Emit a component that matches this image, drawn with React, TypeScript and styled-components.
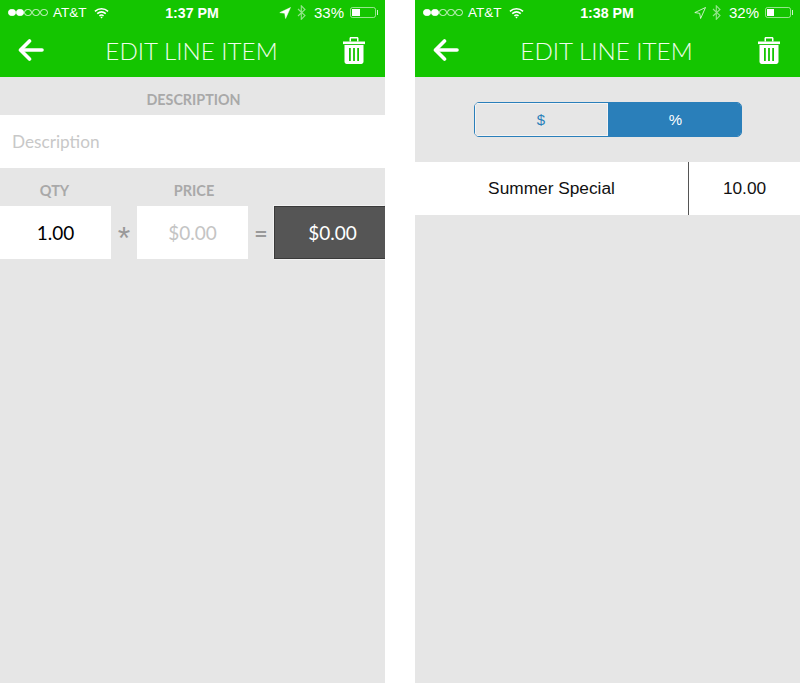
import React from "react";
import styled, { createGlobalStyle } from "styled-components";

const Global = createGlobalStyle`
  html, body { margin: 0; padding: 0; background: #fff; }
  #root { width: 800px; height: 683px; overflow: hidden; }
`;

const Page = styled.div`
  width: 800px;
  height: 683px;
  display: flex;
  justify-content: space-between;
  background: #fff;
`;

const Phone = styled.section`
  width: 385px;
  height: 683px;
  background: #e6e6e6;
  display: flex;
  flex-direction: column;
`;

const Header = styled.header`
  height: 77px;
  background: #14c500;
  color: #fff;
  display: flex;
  flex-direction: column;
  flex-shrink: 0;
`;

const StatusBar = styled.div`
  height: 25px;
  display: grid;
  grid-template-columns: 1fr auto 1fr;
  align-items: center;
  padding: 0 9px 0 8px;
  font: 400 13.5px "Liberation Sans", Arial, sans-serif;
`;

const StatusLeft = styled.div`
  display: flex;
  align-items: center;
`;

const StatusRight = styled.div`
  display: flex;
  align-items: center;
  justify-content: flex-end;
`;

const Signal = styled.span`
  display: flex;
  gap: 0.5px;
  margin-right: 5px;
`;

const Dot = styled.i<{ $on: boolean }>`
  width: 7.6px;
  height: 7.6px;
  box-sizing: border-box;
  border-radius: 50%;
  border: 1px solid #fff;
  background: ${(p) => (p.$on ? "#fff" : "transparent")};
  opacity: ${(p) => (p.$on ? 1 : 0.8)};
`;

const Carrier = styled.span`
  margin-right: 8px;
`;

const Clock = styled.span`
  font-weight: 700;
  font-size: 14.2px;
`;

const Percent = styled.span`
  margin: 0 6px 0 8px;
  font-size: 15px;
`;

const Battery = styled.span`
  width: 26px;
  height: 11px;
  box-sizing: border-box;
  border: 1px solid rgba(255, 255, 255, 0.55);
  border-radius: 2.5px;
  padding: 1px;
  display: flex;
  position: relative;
  &::after {
    content: "";
    position: absolute;
    right: -3px;
    top: 2px;
    width: 1.5px;
    height: 5px;
    background: rgba(255, 255, 255, 0.8);
  }
`;

const BatteryFill = styled.span<{ $w: number }>`
  width: ${(p) => p.$w}px;
  background: #fff;
`;

const NavBar = styled.div`
  flex: 1;
  display: grid;
  grid-template-columns: 1fr auto 1fr;
  align-items: center;
  padding: 0 20px 2px 18px;
`;

const NavEnd = styled.div`
  display: flex;
  justify-content: flex-end;
`;

const Title = styled.h1`
  margin: 0;
  font: 300 24.2px Lato, "Open Sans", sans-serif;
  color: #effdec;
`;

const SectionLabel = styled.div`
  height: 38px;
  box-sizing: border-box;
  padding: 6px 0 0 2px;
  display: flex;
  align-items: center;
  justify-content: center;
  font: 700 14.3px Lato, sans-serif;
  color: #a9a9a9;
`;

const DescriptionField = styled.div`
  height: 53px;
  background: #fff;
  display: flex;
  align-items: center;
  padding-left: 12px;
  font: 400 17.2px Lato, sans-serif;
  color: #c8c8c8;
`;

const CalcGrid = styled.div`
  display: grid;
  grid-template-columns: 111px 26px 111px 26px 111px;
`;

const CalcLabel = styled.div<{ $nudge: number }>`
  height: 38px;
  box-sizing: border-box;
  padding-top: 6px;
  padding-left: ${(p) => Math.max(p.$nudge, 0)}px;
  padding-right: ${(p) => Math.max(-p.$nudge, 0)}px;
  display: flex;
  align-items: center;
  justify-content: center;
  font: 700 14.5px Lato, sans-serif;
  color: #a9a9a9;
`;

const Cell = styled.div<{ $muted?: boolean }>`
  height: 53px;
  background: #fff;
  display: flex;
  align-items: center;
  justify-content: center;
  font: 400 19px Lato, sans-serif;
  color: ${(p) => (p.$muted ? "#c4c4c4" : "#000")};
`;

const Operator = styled.div<{ $star?: boolean }>`
  height: 53px;
  box-sizing: border-box;
  display: flex;
  align-items: center;
  justify-content: center;
  padding-top: ${(p) => (p.$star ? "11px" : "0")};
  font: ${(p) => (p.$star ? '400 32px "Liberation Sans", sans-serif' : "700 23px Lato, sans-serif")};
  color: #999;
`;

const TotalCell = styled.div`
  height: 53px;
  box-sizing: border-box;
  background: #555;
  border: 1px solid #3a3a3a;
  border-right: 0;
  padding-left: 5px;
  box-shadow: -1px -1px 0 #f2f2f2, 0 1px 0 #f2f2f2;
  display: flex;
  align-items: center;
  justify-content: center;
  font: 400 19px Lato, sans-serif;
  color: #fff;
`;

const Segmented = styled.div`
  align-self: center;
  margin-top: 25px;
  width: 268px;
  height: 35px;
  box-sizing: border-box;
  border: 1.5px solid #2a7fba;
  border-radius: 5px;
  display: flex;
  overflow: hidden;
`;

const Segment = styled.div<{ $active?: boolean }>`
  width: 50%;
  box-sizing: border-box;
  display: flex;
  align-items: center;
  justify-content: center;
  padding-left: ${(p) => (p.$active ? "3px" : "0")};
  font: 400 15px "Liberation Sans", Arial, sans-serif;
  background: ${(p) => (p.$active ? "#2a7fba" : "#e6e6e6")};
  box-shadow: ${(p) => (p.$active ? "none" : "inset 0 0 0 1px #f4f4f4")};
  color: ${(p) => (p.$active ? "#fff" : "#2a7fba")};
`;

const DiscountRow = styled.div`
  margin-top: 25px;
  height: 53px;
  background: #fff;
  display: grid;
  grid-template-columns: 273px 1px 111px;
  font: 400 17.3px "Liberation Sans", Arial, sans-serif;
  color: #111;
`;

const DiscountCell = styled.div`
  display: flex;
  align-items: center;
  justify-content: center;
`;

const Divider = styled.div`
  background: #555;
`;

const Wifi = () => (
  <svg width="15" height="12" viewBox="0 0 16 12" fill="none" stroke="#fff" strokeWidth="1.7">
    <path d="M1 4.2C5 .6 11 .6 15 4.2" />
    <path d="M3.4 6.7c2.7-2.3 6.5-2.3 9.2 0" />
    <path d="M5.8 9c1.3-1 3.1-1 4.4 0" />
    <path d="M8 11.8 6.7 10.3c.8-.5 1.8-.5 2.6 0z" fill="#fff" stroke="none" />
  </svg>
);

const Location = ({ filled }: { filled: boolean }) => (
  <svg width="12" height="12" viewBox="0 0 12 12">
    <path
      d="M11.5.5 .8 5.6l4.9.7.9 5.2z"
      fill={filled ? "#fff" : "none"}
      stroke="#fff"
      strokeWidth={filled ? 0.5 : 1}
      strokeLinejoin="round"
      opacity={filled ? 1 : 0.75}
    />
  </svg>
);

const Bluetooth = () => (
  <svg width="9" height="15" viewBox="0 0 9 15" fill="none" stroke="#fff" strokeOpacity="0.55" strokeWidth="1.1" style={{ marginLeft: 6 }}>
    <path d="M1 4l7 6.5-3.7 3.8V.8L8 4.5 1 11" />
  </svg>
);

const BackArrow = () => (
  <svg width="26" height="22" viewBox="0 0 26 22" fill="none" stroke="#fff" strokeWidth="3.6" strokeLinecap="round" strokeLinejoin="round">
    <path d="M24 11H3" />
    <path d="M11.5 2 2.5 11l9 9" />
  </svg>
);

const Trash = () => (
  <svg width="22" height="27" viewBox="0 0 22 27" fill="#fff">
    <path d="M0 4.5h22v2.6H0z" />
    <path d="M6.5 4.5V1.4C6.5 .6 7.1 0 7.9 0h6.2c.8 0 1.4.6 1.4 1.4v3.1H14V1.6H8v2.9z" />
    <path
      fillRule="evenodd"
      d="M1.5 8h19v16.8c0 1.2-1 2.2-2.2 2.2H3.7c-1.2 0-2.2-1-2.2-2.2zM6 11v13h1.8V11zm4.1 0v13h1.8V11zm4.1 0v13H16V11z"
    />
  </svg>
);

type BarProps = { time: string; pct: string; fill: number; solid: boolean };

const Bar = ({ time, pct, fill, solid }: BarProps) => (
  <StatusBar>
    <StatusLeft>
      <Signal>
        {[true, true, false, false, false].map((on, i) => (
          <Dot key={i} $on={on} />
        ))}
      </Signal>
      <Carrier>AT&amp;T</Carrier>
      <Wifi />
    </StatusLeft>
    <Clock>{time}</Clock>
    <StatusRight>
      <Location filled={solid} />
      <Bluetooth />
      <Percent>{pct}</Percent>
      <Battery>
        <BatteryFill $w={fill} />
      </Battery>
    </StatusRight>
  </StatusBar>
);

const TopHeader = (props: BarProps) => (
  <Header>
    <Bar {...props} />
    <NavBar>
      <BackArrow />
      <Title>EDIT LINE ITEM</Title>
      <NavEnd>
        <Trash />
      </NavEnd>
    </NavBar>
  </Header>
);

export default function App() {
  return (
    <Page>
      <Global />
      <Phone>
        <TopHeader time="1:37 PM" pct="33%" fill={8} solid />
        <SectionLabel>DESCRIPTION</SectionLabel>
        <DescriptionField>Description</DescriptionField>
        <CalcGrid>
          <CalcLabel $nudge={-2}>QTY</CalcLabel>
          <span />
          <CalcLabel $nudge={3}>PRICE</CalcLabel>
          <span />
          <span />
          <Cell>1.00</Cell>
          <Operator $star>*</Operator>
          <Cell $muted>$0.00</Cell>
          <Operator>=</Operator>
          <TotalCell>$0.00</TotalCell>
        </CalcGrid>
      </Phone>
      <Phone>
        <TopHeader time="1:38 PM" pct="32%" fill={7} solid={false} />
        <Segmented>
          <Segment>$</Segment>
          <Segment $active>%</Segment>
        </Segmented>
        <DiscountRow>
          <DiscountCell>Summer Special</DiscountCell>
          <Divider />
          <DiscountCell>10.00</DiscountCell>
        </DiscountRow>
      </Phone>
    </Page>
  );
}
